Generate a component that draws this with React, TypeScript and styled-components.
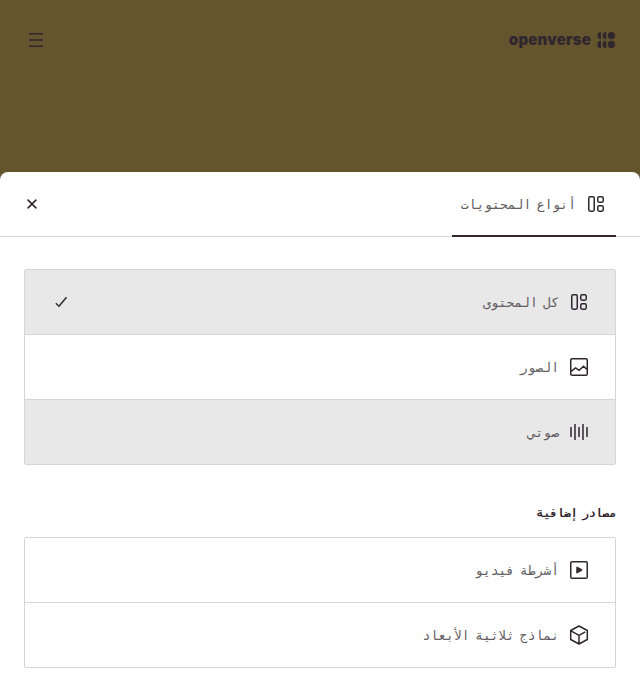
import React from "react";
import styled, { createGlobalStyle } from "styled-components";

const GlobalStyle = createGlobalStyle`
  * { box-sizing: border-box; }
  body { margin: 0; background: #64552e; }
`;

const Page = styled.div`
  height: 700px;
  display: flex;
  flex-direction: column;
  overflow: hidden;
  background: #64552e;
  color: #30272e;
  font-family: "DejaVu Sans Mono", monospace;
  font-size: 13px;
`;

const Header = styled.header`
  height: 172px;
  flex: none;
  padding: 28px 24px 0;
  display: flex;
  align-items: flex-start;
  justify-content: space-between;
`;

const Brand = styled.div`
  height: 24px;
  display: flex;
  align-items: center;
  gap: 6px;
  direction: ltr;
`;

const Wordmark = styled.span`
  font: 900 15px/24px Inter, sans-serif;
  letter-spacing: 0.2px;
`;

const IconButton = styled.button`
  width: 24px;
  height: 24px;
  padding: 0;
  border: 0;
  background: none;
  color: inherit;
  display: flex;
  align-items: center;
  justify-content: center;
`;

const MenuButton = styled(IconButton)``;

const CloseButton = styled(IconButton)`
  width: 16px;
  height: 64px;
`;

const Sheet = styled.main`
  flex: 1;
  background: #fff;
  border-radius: 8px 8px 0 0;
`;

const TabBar = styled.div`
  height: 65px;
  padding: 0 24px;
  display: flex;
  justify-content: space-between;
  border-bottom: 1px solid #d6d4d5;
`;

const Tab = styled.div`
  width: 164px;
  height: 65px;
  padding: 1px 8px 0;
  display: flex;
  align-items: center;
  gap: 8px;
  border-bottom: 2px solid #30272e;
`;

const Icon = styled.svg`
  width: 24px;
  height: 24px;
  flex: none;
  display: block;
  fill: none;
  stroke: currentColor;
  stroke-width: 1.5;
`;

const Label = styled.span`
  padding-top: 2px;
  font-size: 13px;
  line-height: 20px;
  white-space: nowrap;
  word-spacing: -2.2px;
  color: #625c61;
`;

const Content = styled.div`
  padding: 32px 24px;
`;

const List = styled.ul`
  list-style: none;
  margin: 0;
  padding: 0;
  border: 1px solid #d6d4d5;
  border-radius: 2px;
`;

const Item = styled.li<{ $shaded?: boolean }>`
  height: 65px;
  padding: 0 24px;
  display: flex;
  align-items: center;
  gap: 8px;
  background: ${(p) => (p.$shaded ? "#e8e8e8" : "#fff")};
  border-bottom: 1px solid #d6d4d5;
  &:last-child { height: 64px; border-bottom: 0; }
`;

const Check = styled(Icon)`
  margin-inline-start: auto;
`;

const Heading = styled.h2`
  margin: 41px 0 15px;
  height: 16px;
  font-size: 11.3px;
  line-height: 16px;
  font-weight: 700;
  word-spacing: -2.4px;
`;

const AllIcon = () => (
  <Icon viewBox="0 0 24 24">
    <rect x="4.75" y="4.75" width="5.5" height="14.5" rx="1.4" />
    <rect x="13.75" y="4.75" width="5.5" height="5.5" rx="1.4" />
    <rect x="13.75" y="13.75" width="5.5" height="5.5" rx="1.4" />
  </Icon>
);

const ImageIcon = () => (
  <Icon viewBox="0 0 24 24">
    <rect x="3.75" y="3.75" width="16.5" height="16.5" rx="1.3" />
    <path d="M4 16.3 8.6 12.9 12.1 15.4 16.6 11.2 20 14.5" />
  </Icon>
);

const AudioIcon = () => (
  <Icon viewBox="0 0 24 24">
    <path d="M4 7v10M8 4v16M12 7v10M16 4v16M20 7v10" />
  </Icon>
);

const VideoIcon = () => (
  <Icon viewBox="0 0 24 24">
    <rect x="3.75" y="3.75" width="16.5" height="16.5" rx="1.3" />
    <path d="M10 9.3v5.4l4.6-2.7Z" fill="currentColor" strokeLinejoin="round" />
  </Icon>
);

const ModelIcon = () => (
  <Icon viewBox="0 0 24 24">
    <path d="M12 3 20.3 7.5v9L12 21 3.7 16.5v-9ZM4 7.9l8 4.4 6.2-3.4M12 12.3V21" strokeLinejoin="round" />
  </Icon>
);

export default function App() {
  return (
    <Page dir="rtl" lang="ar">
      <GlobalStyle />
      <Header>
        <Brand>
          <Wordmark>openverse</Wordmark>
          <svg width="19" height="18" viewBox="0 0 19 18" fill="#30272e">
            <circle cx="14.4" cy="4.6" r="3.6" />
            <circle cx="14.4" cy="13.4" r="3.6" />
            <path d="M9.2 1a3.6 3.6 0 0 0 0 7.2ZM9.2 9.8a3.6 3.6 0 0 0 0 7.2ZM4 1a3.6 3.6 0 0 0 0 7.2ZM4 9.8a3.6 3.6 0 0 0 0 7.2Z" />
          </svg>
        </Brand>
        <MenuButton aria-label="القائمة">
          <Icon viewBox="0 0 24 24"><path d="M5 5.75h14M5 12h14M5 18.25h14" /></Icon>
        </MenuButton>
      </Header>
      <Sheet>
        <TabBar>
          <Tab><AllIcon /><Label>أنواع المحتويات</Label></Tab>
          <CloseButton aria-label="إغلاق">
            <Icon viewBox="0 0 24 24"><path d="m7.6 7.6 8.8 8.8M16.4 7.6l-8.8 8.8" /></Icon>
          </CloseButton>
        </TabBar>
        <Content>
          <List>
            <Item $shaded>
              <AllIcon />
              <Label>كل المحتوى</Label>
              <Check viewBox="0 0 24 24"><path d="m6.8 13.3 3.2 2.9 7.5-9" /></Check>
            </Item>
            <Item><ImageIcon /><Label>الصور</Label></Item>
            <Item $shaded><AudioIcon /><Label>صوتي</Label></Item>
          </List>
          <Heading>مصادر إضافية</Heading>
          <List>
            <Item><VideoIcon /><Label>أشرطة فيديو</Label></Item>
            <Item><ModelIcon /><Label>نماذج ثلاثية الأبعاد</Label></Item>
          </List>
        </Content>
      </Sheet>
    </Page>
  );
}
